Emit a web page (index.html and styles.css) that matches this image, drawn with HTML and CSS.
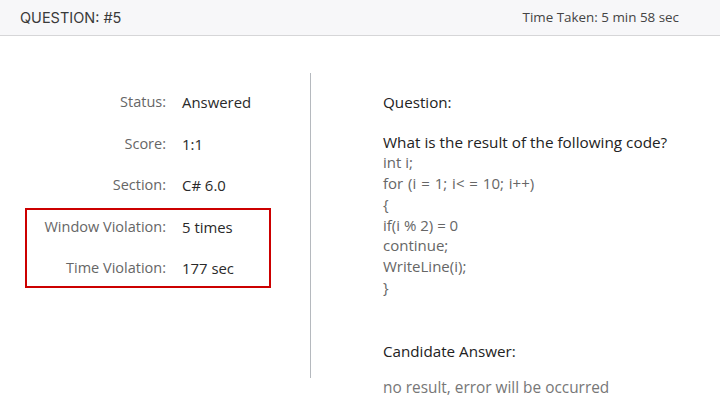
FILE: index.html
```html
<!DOCTYPE html>
<html>
<head>
<meta charset="utf-8">
<link rel="stylesheet" href="styles.css">
</head>
<body>
<header class="topbar">
  <div class="title">QUESTION: #5</div>
  <div class="time">Time Taken: 5 min 58 sec</div>
</header>
<main class="main">
  <section class="details">
    <div class="row"><span class="label">Status:</span><span class="value">Answered</span></div>
    <div class="row"><span class="label">Score:</span><span class="value">1:1</span></div>
    <div class="row"><span class="label">Section:</span><span class="value">C# 6.0</span></div>
    <div class="violations">
      <div class="row"><span class="label">Window Violation:</span><span class="value">5 times</span></div>
      <div class="row"><span class="label">Time Violation:</span><span class="value">177 sec</span></div>
    </div>
  </section>
  <div class="divider"></div>
  <section class="question">
    <div class="heading">Question:</div>
    <div class="prompt">What is the result of the following code?</div>
    <div class="code">
      <div>int i;</div>
      <div class="spaced">for (i = 1; i&lt; = 10; i++)</div>
      <div>{</div>
      <div>if(i % 2) = 0</div>
      <div>continue;</div>
      <div>WriteLine(i);</div>
      <div>}</div>
    </div>
    <div class="heading answer-heading">Candidate Answer:</div>
    <div class="answer">no result, error will be occurred</div>
  </section>
</main>
</body>
</html>
```
FILE: styles.css
```css
* { box-sizing: border-box; }
html, body { margin: 0; padding: 0; background: #fff; }
body { font-family: "Open Sans", sans-serif; color: #333; width: 720px; height: 420px; overflow: hidden; }

.topbar {
  height: 36px;
  background: #f7f7f9;
  border-bottom: 1px solid #d6d6d8;
  display: flex;
  align-items: center;
  justify-content: space-between;
  padding: 0 41px 1px 20px;
}
.title { font-family: "Inter", sans-serif; font-size: 14.5px; color: #3a3a3a; }
.time { font-size: 13.4px; color: #444; }

.main { display: flex; }

.details { width: 310px; padding-top: 56px; }
.row { display: flex; line-height: 20px; font-size: 14.5px; }
.row + .row { margin-top: 21.5px; }
.label { width: 166px; text-align: right; color: #666; }
.value { margin-left: 16px; color: #2a2a2a; font-size: 14.9px; }

.violations {
  margin: 13px 0 0 25px;
  width: 246px;
  border: 2px solid #cc0000;
  padding: 6.5px 0 8px;
}
.violations .label { width: 139px; }

.divider {
  width: 1px;
  height: 305px;
  margin-top: 37px;
  background: #b5b9be;
  flex: none;
}

.question { padding: 56px 0 0 72px; }
.heading { font-size: 15.2px; line-height: 20px; color: #222; }
.prompt { margin-top: 19.5px; font-size: 15.3px; line-height: 20.8px; color: #222; }
.code { font-size: 15px; line-height: 20.8px; color: #666; }
.spaced { word-spacing: 1px; }
.answer-heading { margin-top: 42.8px; }
.answer { margin-top: 17px; font-size: 15.4px; line-height: 20px; color: #777; }
```
